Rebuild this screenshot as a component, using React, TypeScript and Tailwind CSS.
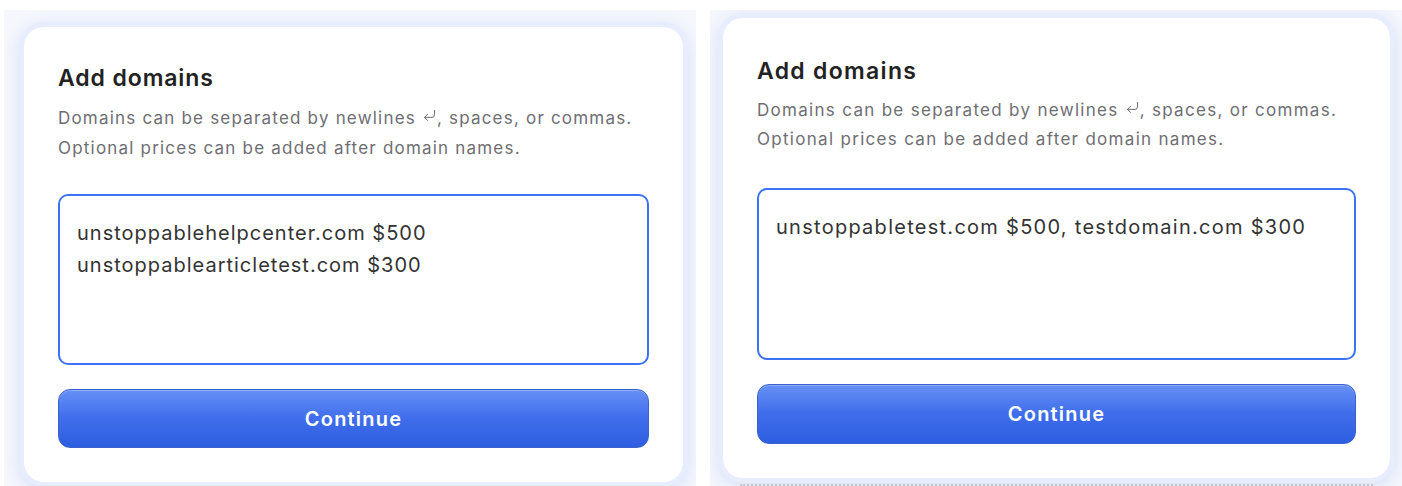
import { CornerDownLeft } from 'lucide-react'

type CardProps = {
  value: string
  padTop: string
  descLeading: string
  gapBeforeBox: string
  boxHeight: string
  buttonHeight: string
  titleTracking: string
  descTracking: string
  boxTracking: string
}

function DomainsCard({
  value,
  padTop,
  descLeading,
  gapBeforeBox,
  boxHeight,
  buttonHeight,
  titleTracking,
  descTracking,
  boxTracking,
}: CardProps) {
  return (
    <div
      className={`flex flex-col bg-white rounded-[20px] px-[34px] pb-[34px] ${padTop} shadow-[0_0_0_5px_#e7edfd,0_4px_18px_4px_#d3ddf8]`}
    >
      <h2 className={`text-[23px] leading-[28px] font-semibold text-[#222222] ${titleTracking}`}>
        Add domains
      </h2>
      <p className={`mt-[11px] text-[17px] ${descLeading} text-[#6e6e73] ${descTracking}`}>
        Domains can be separated by newlines{' '}
        <CornerDownLeft className="inline-block w-[15px] h-[15px] -mt-[7px] text-[#6e6e73]" strokeWidth={1.6} />, spaces, or commas.
        <br />
        Optional prices can be added after domain names.
      </p>
      <textarea
        readOnly
        value={value}
        className={`${gapBeforeBox} ${boxHeight} w-full resize-none rounded-[10px] border-2 border-[#3d72f4] px-[17px] pt-[21px] text-[20px] leading-[32px] text-[#333333] ${boxTracking} outline-none`}
      />
      <button
        className={`mt-[24px] ${buttonHeight} w-full rounded-[12px] border border-[#3a61cc] bg-gradient-to-b from-[#6690f6] via-[#3f6deb] to-[#2e5ee0] text-[20px] font-semibold tracking-[1.2px] text-white shadow-[inset_0_1px_0_rgba(255,255,255,0.25)]`}
      >
        Continue
      </button>
    </div>
  )
}

export default function App() {
  return (
    <div
      className="flex gap-[14px] bg-white pt-[10px] pl-[4px] h-[486px] overflow-hidden"
      style={{ fontFamily: 'Inter, "Noto Sans", sans-serif' }}
    >
      {/* Left screenshot */}
      <div className="w-[692px] h-[476px] shrink-0 bg-[#f5f7fc] pl-[20px] pr-[13px] pt-[17px] overflow-hidden">
        <DomainsCard
          value={'unstoppablehelpcenter.com $500\nunstoppablearticletest.com $300'}
          padTop="pt-[37px]"
          descLeading="leading-[30px]"
          gapBeforeBox="mt-[31px]"
          boxHeight="h-[171px]"
          buttonHeight="h-[59px]"
          titleTracking="tracking-[0.9px]"
          descTracking="tracking-[1.2px]"
          boxTracking="tracking-[1px]"
        />
      </div>

      {/* Right screenshot */}
      <div className="w-[692px] h-[476px] shrink-0 bg-[#f5f7fc] pl-[13px] pr-[12px] pt-[8px] overflow-hidden">
        <DomainsCard
          value="unstoppabletest.com $500, testdomain.com $300"
          padTop="pt-[39px]"
          descLeading="leading-[29px]"
          gapBeforeBox="mt-[34px]"
          boxHeight="h-[172px]"
          buttonHeight="h-[60px]"
          titleTracking="tracking-[1.3px]"
          descTracking="tracking-[1.3px]"
          boxTracking="tracking-[1.27px]"
        />
        <div className="mt-[6px] mx-[17px] border-t-2 border-dotted border-[#c9c9cc]" />
      </div>
    </div>
  )
}
